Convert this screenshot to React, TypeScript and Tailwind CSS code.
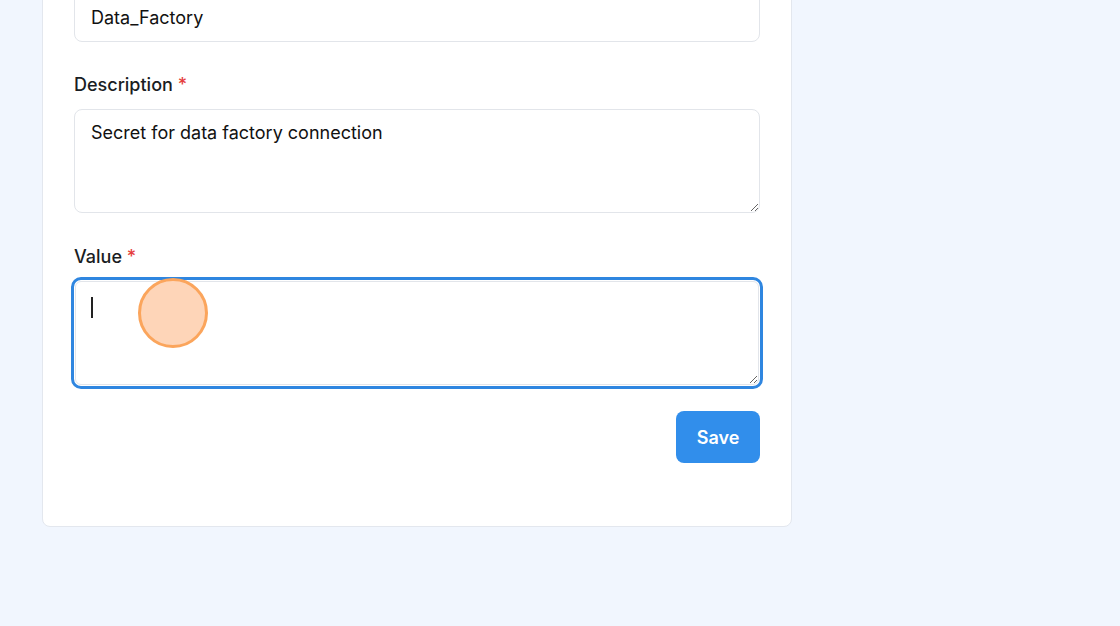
import React from "react";

export default function App() {
  return (
    <div
      className="h-[626px] w-[1120px] overflow-hidden bg-[#f1f6fe]"
      style={{ fontFamily: "Inter, 'Liberation Sans', sans-serif" }}
    >
      <div className="ml-[42px] -mt-[41px] w-[750px] rounded-lg border border-[#e3e7ee] bg-white px-[31px] pt-8 pb-[63px]">
        <div className="flex flex-col gap-[31px]">
          <input
            readOnly
            value="Data_Factory"
            className="h-[50px] w-full rounded-lg border border-[#e2e5ea] px-4 text-[18px] text-[#111] outline-none"
          />
          <div className="flex flex-col gap-3">
            <label className="text-[18px] leading-6 font-medium text-[#1a1d23]">
              Description <span className="text-[#e53e3e]">*</span>
            </label>
            <textarea
              readOnly
              value="Secret for data factory connection"
              className="block h-[104px] w-full rounded-lg border border-[#e2e5ea] px-4 py-[11px] text-[18px] leading-6 text-[#111] outline-none"
            />
          </div>
          <div className="mt-px flex flex-col gap-3">
            <label className="text-[18px] leading-6 font-medium text-[#1a1d23]">
              Value <span className="text-[#e53e3e]">*</span>
            </label>
            <div className="relative px-px">
              <textarea
                readOnly
                value=""
                className="block h-[104px] w-full rounded-md border border-[#e2e5ea] px-[15px] py-[11px] text-[18px] leading-6 text-[#111] outline-[3px] outline-offset-[1px] outline-[#2f86e0] outline-solid"
              />
              <span className="pointer-events-none absolute left-[17px] top-[16px] h-[21px] w-[2px] bg-[#222]" />
              <span className="pointer-events-none absolute left-[64px] top-[-3px] h-[70px] w-[70px] rounded-full border-[3px] border-[#fba55c] bg-[#fed5b8]" />
            </div>
          </div>
        </div>
        <div className="mt-[26px] flex justify-end">
          <button className="h-[52px] w-[84px] rounded-lg bg-[#318eeb] text-[18px] font-semibold text-white">
            Save
          </button>
        </div>
      </div>
    </div>
  );
}
